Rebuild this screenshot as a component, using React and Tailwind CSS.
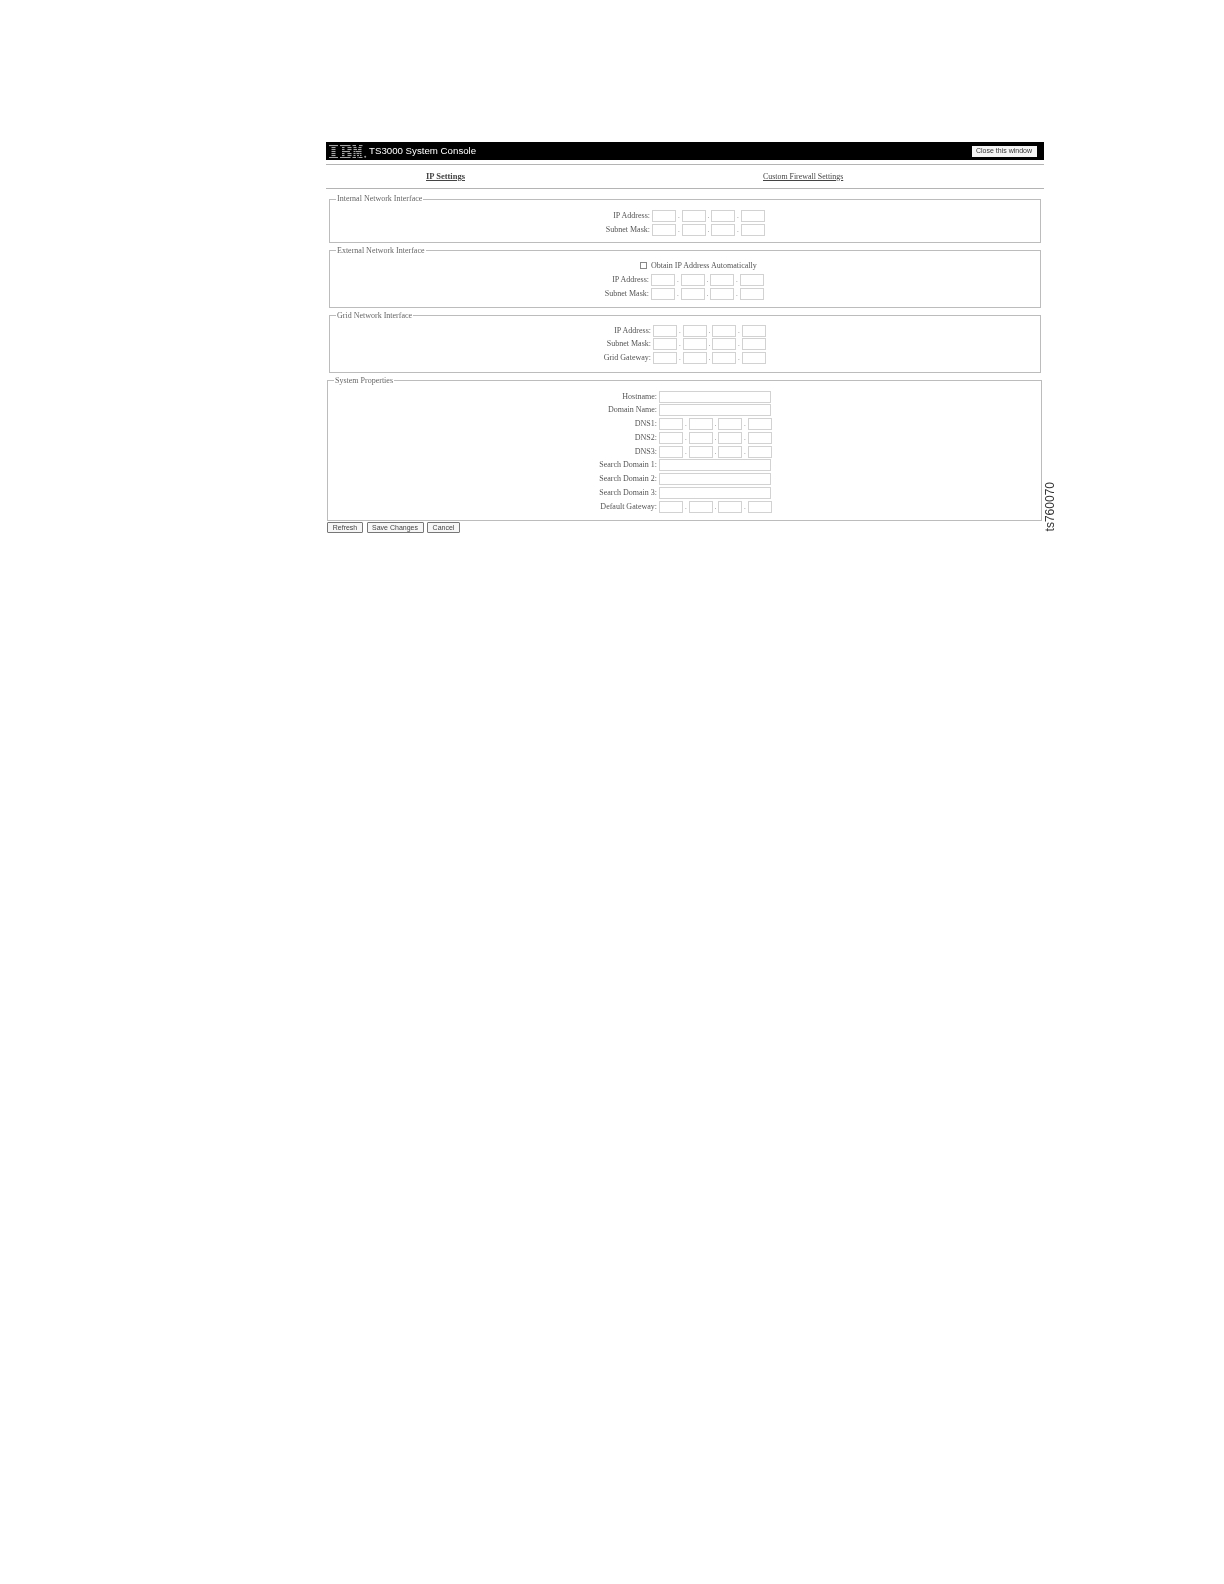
const serif = "font-['Liberation_Serif',serif]";
const sans = "font-['Liberation_Sans',sans-serif]";

function Box({ w = "w-[24px]" }) {
  return <span className={`${w} block h-[12px] shrink-0 border border-[#d2d2d2] bg-white`} />;
}

function Dot() {
  return <span className="w-[5.5px] text-center text-[7px] leading-[12px] text-[#888]">.</span>;
}

function Ip() {
  return (
    <div className="flex items-center">
      <Box />
      <Dot />
      <Box />
      <Dot />
      <Box />
      <Dot />
      <Box />
    </div>
  );
}

function Row({ label, col, children }) {
  return (
    <div className="flex h-[12px] items-center">
      <span className={`${col} shrink-0 whitespace-nowrap pr-[2px] text-right text-[8px] leading-[12px] text-[#555]`}>{label}</span>
      {children}
    </div>
  );
}

function Section({ title, className, legendClass = "ml-[6px]", children }) {
  return (
    <fieldset className={`border border-[#bcbcbc] ${className}`}>
      <legend className={`h-[12px] px-[1px] text-[8px] leading-[12px] text-[#666] ${legendClass}`}>{title}</legend>
      {children}
    </fieldset>
  );
}

const I = [[[0, 9]], [[2.5, 6.5]], [[2.5, 6.5]], [[2.5, 6.5]], [[2.5, 6.5]], [[2.5, 6.5]], [[0, 9]]];
const B = [
  [[11, 21.5]],
  [[13, 15.5], [18.5, 22.5]],
  [[13, 15.5], [18.5, 22.5]],
  [[13, 21]],
  [[13, 15.5], [18.5, 22.5]],
  [[13, 15.5], [18.5, 22.5]],
  [[11, 21.5]],
];
const M = [
  [[23.5, 27], [30, 33.5]],
  [[24.5, 27.5], [29.5, 32.5]],
  [[24.5, 28], [29, 32.5]],
  [[24.5, 26.5], [27, 31], [31, 32.5]],
  [[24.5, 26.5], [27.5, 30.5], [31, 32.5]],
  [[24.5, 26.5], [28, 30], [31, 32.5]],
  [[23.5, 27], [28.5, 29.5], [30, 33.5]],
];

function Logo() {
  return (
    <svg width="38" height="13" viewBox="0 0 38 13" className="shrink-0">
      <g fill="#a6a6a6">
        {[I, B, M].flatMap((letter, l) =>
          letter.flatMap((segments, row) =>
            segments.map(([a, b], s) => (
              <rect key={`${l}-${row}-${s}`} x={a} y={row * 2} width={b - a} height="1.1" />
            ))
          )
        )}
      </g>
      <circle cx="36.2" cy="11.8" r="1" fill="#9a9a9a" />
    </svg>
  );
}

function Btn({ children, className }) {
  return (
    <button className={`h-[11px] rounded-[1px] border border-[#777] bg-[#f6f6f6] text-center text-[7px] leading-[9px] text-[#444] ${sans} ${className}`}>
      {children}
    </button>
  );
}

export default function App() {
  const sysCol = "w-[331px]";
  return (
    <div className={`relative min-h-[1584px] bg-white pl-[326px] pt-[142px] blur-[0.35px] ${serif}`}>
      <div className="w-[717.5px]">
        <div className="flex h-[18px] items-center bg-black pl-[3px] pr-[7px]">
          <Logo />
          <span className={`ml-[2px] text-[9.7px] leading-[18px] text-white ${sans}`}>TS3000 System Console</span>
          <span className={`ml-auto flex h-[11px] w-[65px] items-center justify-center bg-[#f5f5f5] text-[7px] text-[#333] ${sans}`}>Close this window</span>
        </div>
        <div className="mt-[4px] flex h-[25px] items-center border-y border-[#b4b4b4] text-[#444]">
          <div className="w-[239px] text-center text-[8.5px] font-bold underline">IP Settings</div>
          <div className="ml-[198px] w-[80px] whitespace-nowrap text-center text-[7.9px] underline">Custom Firewall Settings</div>
        </div>

        <Section title="Internal Network Interface" className="ml-[3px] mt-[4px] w-[712px] pb-[6px]">
          <div className="flex flex-col gap-[1.5px] pt-[5px]">
            <Row label="IP Address:" col="w-[322px]"><Ip /></Row>
            <Row label="Subnet Mask:" col="w-[322px]"><Ip /></Row>
          </div>
        </Section>

        <Section title="External Network Interface" className="ml-[3px] mt-[2px] w-[712px] pb-[7px]">
          <div className="flex flex-col gap-[2px] pt-[3px]">
            <div className="flex h-[12px] items-center pl-[310px]">
              <span className="h-[7px] w-[7px] border border-[#888] bg-white" />
              <span className="ml-[4px] whitespace-nowrap text-[8px] leading-[12px] text-[#555]">Obtain IP Address Automatically</span>
            </div>
            <Row label="IP Address:" col="w-[321px]"><Ip /></Row>
            <Row label="Subnet Mask:" col="w-[321px]"><Ip /></Row>
          </div>
        </Section>

        <Section title="Grid Network Interface" className="ml-[3px] mt-[2px] w-[712px] pb-[8px]">
          <div className="flex flex-col gap-[1.5px] pt-[3px]">
            <Row label="IP Address:" col="w-[323px]"><Ip /></Row>
            <Row label="Subnet Mask:" col="w-[323px]"><Ip /></Row>
            <Row label="Grid Gateway:" col="w-[323px]"><Ip /></Row>
          </div>
        </Section>

        <Section title="System Properties" className="ml-[1px] mt-[2px] w-[715px] pb-[7px]">
          <div className="flex flex-col gap-[1.75px] pt-[4px]">
            <Row label="Hostname:" col={sysCol}><Box w="w-[112px]" /></Row>
            <Row label="Domain Name:" col={sysCol}><Box w="w-[112px]" /></Row>
            <Row label="DNS1:" col={sysCol}><Ip /></Row>
            <Row label="DNS2:" col={sysCol}><Ip /></Row>
            <Row label="DNS3:" col={sysCol}><Ip /></Row>
            <Row label="Search Domain 1:" col={sysCol}><Box w="w-[112px]" /></Row>
            <Row label="Search Domain 2:" col={sysCol}><Box w="w-[112px]" /></Row>
            <Row label="Search Domain 3:" col={sysCol}><Box w="w-[112px]" /></Row>
            <Row label="Default Gateway:" col={sysCol}><Ip /></Row>
          </div>
        </Section>

        <div className="mt-[1px] flex gap-[3.5px] pl-[1px]">
          <Btn className="w-[36px]">Refresh</Btn>
          <Btn className="w-[57px]">Save Changes</Btn>
          <Btn className="w-[33px]">Cancel</Btn>
        </div>
      </div>
      <span className={`absolute left-[1044px] top-[482px] rotate-180 text-[12px] leading-[13px] text-[#333] [writing-mode:vertical-rl] ${sans}`}>ts760070</span>
    </div>
  );
}
